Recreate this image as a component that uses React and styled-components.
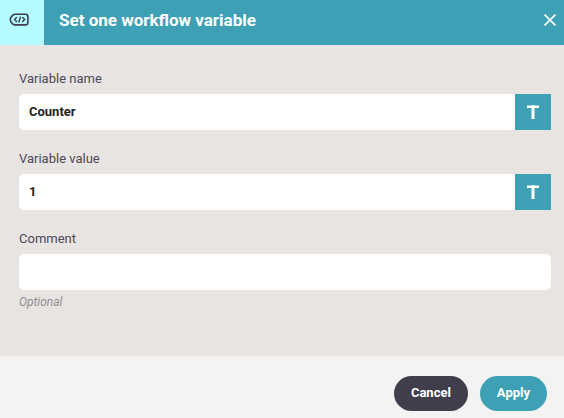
import styled, { createGlobalStyle } from "styled-components";

export default function App() {
    return (
        <>
            <GlobalStyle />
            <Dialog aria-labelledby="dialog-title">
                <Header>
                    <IconBox>
                        <VariableIcon />
                    </IconBox>
                    <Title id="dialog-title">Set one workflow variable</Title>
                    <CloseButton type="button" aria-label="Close">
                        <CloseIcon />
                    </CloseButton>
                </Header>
                <Body>
                    <Field id="name" label="Variable name" value="Counter" hasType />
                    <Field id="value" label="Variable value" value="1" hasType />
                    <Field id="comment" label="Comment" hint="Optional" />
                </Body>
                <Footer>
                    <Button type="button" $color="#403d4d">
                        Cancel
                    </Button>
                    <Button type="submit" $color="#3ea0b4">
                        Apply
                    </Button>
                </Footer>
            </Dialog>
        </>
    );
}

function Field({ id, label, value = "", hint, hasType }) {
    return (
        <FieldGroup>
            <Label htmlFor={id}>{label}</Label>
            <InputRow>
                <Input id={id} type="text" defaultValue={value} $joined={hasType} />
                {hasType && (
                    <TypeButton type="button" aria-label={`${label} type: text`}>
                        <TextIcon />
                    </TypeButton>
                )}
            </InputRow>
            {hint && <Hint>{hint}</Hint>}
        </FieldGroup>
    );
}

function VariableIcon() {
    return (
        <svg width="20" height="14" viewBox="0 0 20 14" fill="none" stroke="#403d4d" strokeLinecap="round" strokeLinejoin="round">
            <path
                d="M6.2 1.3H16.4Q18.9 1.3 18.9 3.8V9.4Q18.9 11.9 16.4 11.9H6.2Q4.8 11.9 3.6 10.8Q1.2 8.6 1.2 6.6Q1.2 4.6 3.6 2.4Q4.8 1.3 6.2 1.3Z"
                strokeWidth="1.6"
            />
            <path d="M7.6 4.6L5.5 6.6L7.6 8.6M13.6 4.6L15.7 6.6L13.6 8.6M11.3 4.2L9.9 9" strokeWidth="1.4" />
        </svg>
    );
}

function CloseIcon() {
    return (
        <svg width="12" height="12" viewBox="0 0 12 12" stroke="#fff" strokeWidth="1.6">
            <path d="M.6 .6L11.4 11.4M11.4 .6L.6 11.4" />
        </svg>
    );
}

// a plain bar and stem, the marker for text values
function TextIcon() {
    return (
        <svg width="12" height="14" viewBox="0 0 12 14" fill="#fff">
            <rect x="0" y="0.5" width="12" height="2.5" />
            <rect x="4.5" y="0.5" width="3" height="13.5" />
        </svg>
    );
}

const GlobalStyle = createGlobalStyle`
    * {
        box-sizing: border-box;
    }

    body {
        margin: 0;
        background: #f5f3f2;
        font-family: Roboto, sans-serif;
        color: #4c4959;
    }

    button,
    input {
        font-family: inherit;
    }
`;

const Dialog = styled.form`
    display: flex;
    flex-direction: column;
`;

const Header = styled.header`
    display: flex;
    height: 45px;
    background: #3ea0b4;
`;

const IconBox = styled.div`
    display: flex;
    align-items: center;
    justify-content: center;
    width: 44px;
    padding: 0 6px 5px 0;
    background: #b3fbff;
`;

const Title = styled.h1`
    flex: 1;
    margin: 0;
    padding-left: 15px;
    font-size: 17px;
    font-weight: 700;
    line-height: 40px;
    color: #fff;
`;

const CloseButton = styled.button`
    display: flex;
    align-items: center;
    justify-content: center;
    width: 28px;
    height: 40px;
    padding: 0;
    border: none;
    background: none;
    cursor: pointer;
`;

const Body = styled.main`
    display: flex;
    flex-direction: column;
    gap: 19px;
    padding: 24px 13px 46px 19px;
    background: #e8e4e1;
`;

const FieldGroup = styled.div`
    display: flex;
    flex-direction: column;
`;

const Label = styled.label`
    margin-bottom: 5px;
    font-size: 13px;
    line-height: 20px;
`;

const InputRow = styled.div`
    display: flex;
    height: 36px;
`;

const Input = styled.input`
    flex: 1;
    min-width: 0;
    padding: 0 10px 2px;
    border: none;
    border-radius: ${({ $joined }) => ($joined ? "5px 0 0 5px" : "5px")};
    background: #fff;
    font-size: 13px;
    font-weight: 700;
    color: #222;
`;

const TypeButton = styled.button`
    display: flex;
    align-items: center;
    justify-content: center;
    width: 36px;
    padding: 0;
    border: none;
    background: #3ea0b4;
    cursor: pointer;
`;

const Hint = styled.small`
    margin-top: 4px;
    font-size: 12px;
    font-style: italic;
    line-height: 16px;
    color: #918d91;
`;

const Footer = styled.footer`
    display: flex;
    justify-content: flex-end;
    gap: 12px;
    padding: 20px 17px 7px;
`;

const Button = styled.button`
    height: 35px;
    padding: 0 17px 2px;
    border: none;
    border-radius: 18px;
    background: ${({ $color }) => $color};
    font-size: 13px;
    font-weight: 700;
    color: #fff;
    cursor: pointer;
`;
